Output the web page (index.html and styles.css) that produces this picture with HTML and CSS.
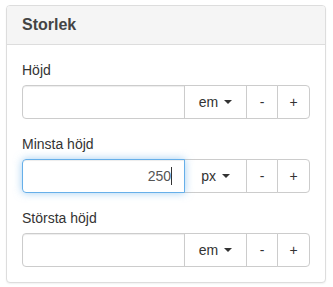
FILE: index.html
```html
<!DOCTYPE html>
<html>
<head>
  <meta charset="UTF-8">
  <title>Storlek</title>
  <link rel="stylesheet" href="styles.css">
</head>
<body>

  <!-- bottom edge of the panel above -->
  <div class="panel-edge"></div>

  <div class="panel">
    <div class="panel-heading">
      <h3 class="panel-title">Storlek</h3>
    </div>
    <div class="panel-body">

      <div class="form-group">
        <label>Höjd</label>
        <div class="input-group">
          <div class="form-control"></div>
          <div class="btn btn-unit">em <span class="caret"></span></div>
          <div class="btn btn-minus">-</div>
          <div class="btn btn-plus">+</div>
        </div>
      </div>

      <div class="form-group">
        <label>Minsta höjd</label>
        <div class="input-group">
          <div class="form-control focus">250<span class="cursor"></span></div>
          <div class="btn btn-unit">px <span class="caret"></span></div>
          <div class="btn btn-minus">-</div>
          <div class="btn btn-plus">+</div>
        </div>
      </div>

      <div class="form-group">
        <label>Största höjd</label>
        <div class="input-group">
          <div class="form-control"></div>
          <div class="btn btn-unit">em <span class="caret"></span></div>
          <div class="btn btn-minus">-</div>
          <div class="btn btn-plus">+</div>
        </div>
      </div>

    </div>
  </div>

</body>
</html>
```

FILE: styles.css
```css
* {
  box-sizing: border-box;
}

body, html {
  margin: 0;
  padding: 0;
  height: 100%;
  overflow: hidden;
  background: #fff;
  font-family: "Liberation Sans", Arial, sans-serif;
  font-size: 14px;
  color: #333;
}

.panel-edge {
  height: 0;
  margin: 0 7px 0 6px;
  border-radius: 0 0 4px 4px;
  box-shadow: 0 1px 4px rgba(0, 0, 0, 0.14);
}

/* Panel */
.panel {
  margin: 5px 7px 0 6px;
  border: 1px solid #ddd;
  border-radius: 4px;
  background: #fff;
  box-shadow: 0 1px 2px rgba(0, 0, 0, 0.06);
}

.panel-heading {
  background: #f5f5f5;
  border-bottom: 1px solid #ddd;
  border-radius: 3px 3px 0 0;
  padding: 10px 15px;
}

.panel-title {
  margin: 0;
  font-size: 16px;
  line-height: 18px;
  font-weight: bold;
  color: #444;
}

.panel-body {
  padding: 15px 15px 0;
}

.form-group {
  padding-bottom: 15px;
}

label {
  display: block;
  line-height: 20px;
  margin-bottom: 5px;
}

/* Input with buttons */
.input-group {
  display: flex;
  height: 34px;
}

.form-control {
  flex: 1;
  border: 1px solid #ccc;
  border-radius: 4px 0 0 4px;
  padding: 6px 12px;
  line-height: 20px;
  color: #555;
  text-align: right;
  box-shadow: inset 0 1px 1px rgba(0, 0, 0, 0.075);
}

.form-control.focus {
  position: relative;
  z-index: 2;
  border-color: #66afe9;
  box-shadow: inset 0 1px 1px rgba(0, 0, 0, 0.075), 0 0 8px rgba(102, 175, 233, 0.6);
}

.cursor {
  display: inline-block;
  width: 1px;
  height: 18px;
  background: #333;
  vertical-align: -4px;
}

.btn {
  display: flex;
  align-items: center;
  justify-content: center;
  margin-left: -1px;
  border: 1px solid #ccc;
  background: #fff;
  color: #333;
  line-height: 20px;
  white-space: pre;
}

.btn-unit {
  flex: 0 0 63px;
}

.btn-minus {
  flex: 0 0 32px;
}

.btn-plus {
  flex: 0 0 33px;
  border-radius: 0 4px 4px 0;
}

.caret {
  display: inline-block;
  width: 0;
  height: 0;
  margin-left: 2px;
  border-top: 4px solid #333;
  border-left: 4px solid transparent;
  border-right: 4px solid transparent;
}
```
